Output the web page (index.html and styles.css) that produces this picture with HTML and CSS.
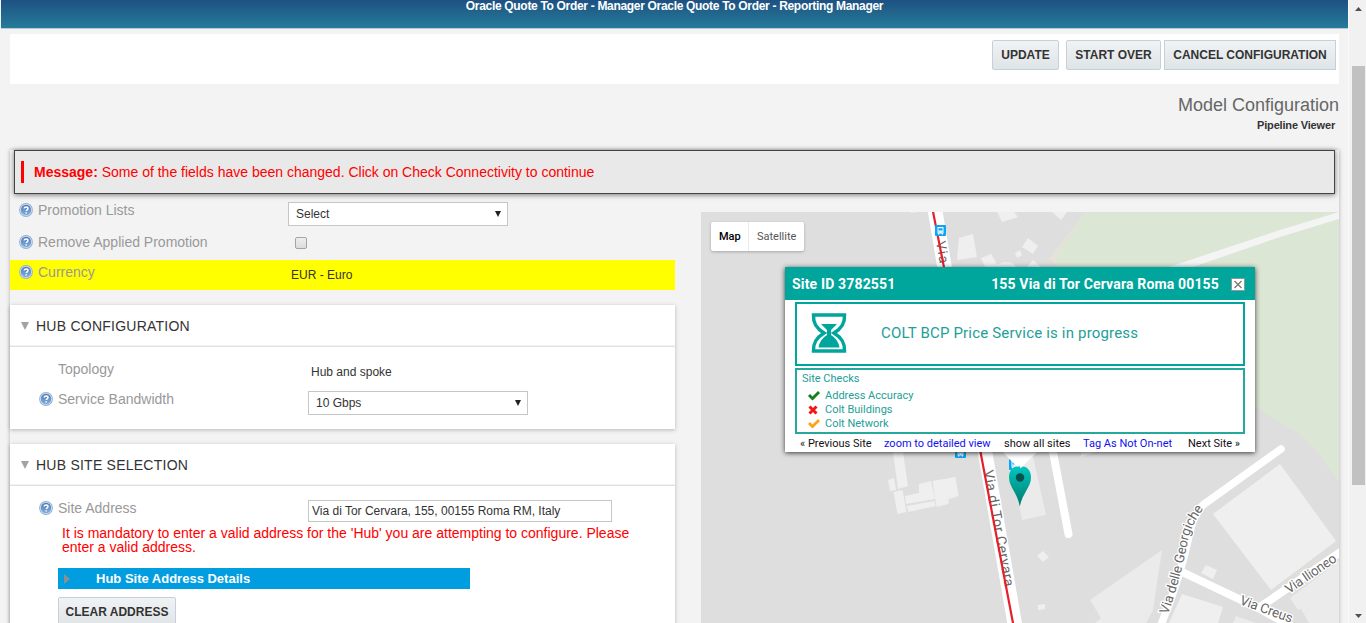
FILE: index.html
```html
<!DOCTYPE html>
<html lang="en">
<head>
<meta charset="utf-8">
<title>Model Configuration</title>
<link rel="stylesheet" href="styles.css">
</head>
<body>
<svg width="0" height="0" class="defs">
  <defs>
    <linearGradient id="ball" x1="0" y1="0" x2="0" y2="1"><stop offset="0" stop-color="#4a79b3"/><stop offset="1" stop-color="#86b0dd"/></linearGradient>
    <linearGradient id="pinfill" x1="0" y1="0" x2="0" y2="1"><stop offset="0" stop-color="#00c8be"/><stop offset="1" stop-color="#00776c"/></linearGradient>
    <symbol id="help" viewBox="0 0 14 14">
      <circle cx="7" cy="7" r="6.9" fill="#8fb0d6"/>
      <circle cx="7" cy="7" r="6" fill="#d3e1f0"/>
      <circle cx="7" cy="7" r="5.2" fill="url(#ball)"/>
      <path d="M5.1 5.500c.2-2.100 3.900-2.100 3.900 0 0 1.300-1.800 1.300-1.800 2.600M7.200 9.200v1.400" fill="none" stroke="#fff" stroke-width="1.500"/>
    </symbol>
    <symbol id="bus" viewBox="0 0 11 11">
      <rect width="11" height="11" rx="1" fill="#0aa5f5"/>
      <path d="M2.500 2h6v6.500h-6z" fill="#fff"/><path d="M3.400 3.200h4.200v2.300H3.400zM3.400 6.600h1v1h-1zM6.600 6.600h1v1h-1z" fill="#0aa5f5"/>
      <path d="M3 8h1.300v1.500H3zM6.700 8H8v1.500H6.700z" fill="#fff"/>
    </symbol>
  </defs>
</svg>
<div class="window">
  <div class="page">
    <header class="topbar"><span>Oracle Quote To Order - Manager Oracle Quote To Order - Reporting Manager</span></header>
    <div class="toolbar">
      <button class="btn b1">UPDATE</button><button class="btn b2">START OVER</button><button class="btn b3">CANCEL CONFIGURATION</button>
    </div>
    <div class="titles"><h1><span>Model Configuration</span></h1><a><span>Pipeline Viewer</span></a></div>
    <main class="content">
      <div class="message"><p><b>Message:</b> <span>Some of the fields have been changed. Click on Check Connectivity to continue</span></p></div>
      <div class="columns">
        <section class="form">
          <div class="row promo"><svg class="help"><use href="#help"/></svg><label>Promotion Lists</label><div class="select"><span>Select</span><svg width="6" height="6"><path d="M0 0h6L3 6z" fill="#222"/></svg></div></div>
          <div class="row remove"><svg class="help"><use href="#help"/></svg><label>Remove Applied Promotion</label><i class="check"></i></div>
          <div class="row currency"><svg class="help"><use href="#help"/></svg><label>Currency</label><span class="value">EUR - Euro</span></div>
          <div class="panel hub">
            <h2><svg width="8" height="8"><path d="M0 0h8L4 8z" fill="#a2a2a2"/></svg><span>HUB CONFIGURATION</span></h2>
            <div class="row topo"><label>Topology</label><span class="value">Hub and spoke</span></div>
            <div class="row band"><svg class="help"><use href="#help"/></svg><label>Service Bandwidth</label><div class="select"><span>10 Gbps</span><svg width="6" height="6"><path d="M0 0h6L3 6z" fill="#222"/></svg></div></div>
          </div>
          <div class="panel site">
            <h2><svg width="8" height="8"><path d="M0 0h8L4 8z" fill="#a2a2a2"/></svg><span>HUB SITE SELECTION</span></h2>
            <div class="row addr"><svg class="help"><use href="#help"/></svg><label>Site Address</label><input class="text" value="Via di Tor Cervara, 155, 00155 Roma RM, Italy"></div>
            <p class="error">It is mandatory to enter a valid address for the 'Hub' you are attempting to configure. Please<br>enter a valid address.</p>
            <div class="details"><svg width="6" height="10"><path d="M0 0v10l6-5z" fill="#8b8f92"/></svg><span>Hub Site Address Details</span></div>
            <button class="btn clear">CLEAR ADDRESS</button>
          </div>
        </section>
        <section class="map">
          <svg class="canvas" viewBox="701 212 638 411" width="638" height="411">
            <rect x="701" y="212" width="638" height="411" fill="#dedede"/>
            <path d="M1085 212L1057 255V268L1255 407L1298 433 1317 451 1339 482V212z" fill="#dce6d4"/>
            <path d="M1085 212L1049 259l8 6v-10L1085 212z" fill="#e6e2d8"/>
            <path d="M1166 268L1280 230 1339 212v7L1283 236 1190 268z" fill="#f4f4f4"/>
            <g fill="#efefef">
              <path d="M959 238l14-4 4 23-20 3zM981 258l10-4 7 12-12 3zM1028 238l10 8-5 8-11-7zM1033 260l9 8h-16zM1015 253l5-3 2 5-5 3zM997 212h17l4 5-16 5zM1052 212h15l-6 8zM911 212h6l-6 1z"/>
              <ellipse cx="1006" cy="268" rx="10" ry="6"/>
              <path d="M893 452h10l5 34-10 3zM888 480l6-2 2 12-6 1zM893.500 492l9-2 4 22-9 2zM905 496l14-3v-9l12-3 4 18-29 5zM932.500 481l23-4 3 19-10 3v5l-12 3zM906.500 506l28-5 1 5-27 6z"/>
              <path d="M1081 452h15l-15 5zM1037 556l6-5 6 6-6 5zM1038 605l7-1v5l-7 1z" />
              <path d="M1280 464l56 77-65 49-58-76zM1206 565l11 5-4 9-12-6zM1182 594l41 13-5 16h-49z"/>
              <path d="M1162 550l-72 50 11 18-6 5h51l7-13zM1290 598l49-37v62h-30l-8-14-3 1zM1236 616l20 7h-23zM1017 452h15l14 63-24 5-6-30z" fill="#ebebeb"/>
            </g>
            <g fill="none" stroke="#fff" stroke-linecap="round">
              <path d="M934 204L944 264 985 452 1016 631" stroke-width="14.500"/>
              <path d="M1053 452L1068.500 534" stroke-width="8"/>
              <path d="M1281 449L1207 502Q1194 510 1189 536Q1180 580 1158 632" stroke-width="7.500"/>
              <path d="M1180 571L1262 610 1294 628M1260 607L1342 551" stroke-width="8"/>
            </g>
            <g class="label">
              <text transform="translate(936 242) rotate(80)" textLength="22">Via</text>
              <text class="long" transform="translate(983.500 471) rotate(79.500)" textLength="118">Via di Tor Cervara</text>
              <path id="georg" d="M1168 615Q1183 570 1188 540 1192 523 1205 507" fill="none" stroke="none"/>
              <text textLength="113"><textPath href="#georg">Via delle Georgiche</textPath></text>
              <text transform="translate(1289 594) rotate(-34.500)" textLength="59">Via Ilioneo</text>
              <text transform="translate(1239 604) rotate(20)" textLength="55">Via Creus</text>
            </g>
            <path d="M931.500 204L944.500 270 980.500 452 1014.500 631" stroke="#e5202c" stroke-width="2.200" fill="none"/>
            <use href="#bus" x="935" y="225" width="11" height="11"/>
            <use href="#bus" x="955" y="447" width="11" height="11"/>
            <use href="#bus" x="1009" y="459" width="11" height="11"/>
            <path d="M1002 451h36L1022.500 466.500h-6z" fill="#fff"/>
            <path d="M1019.800 506.500C1017.500 493 1009 487 1009 477.500C1009 470.500 1013 466.500 1017 466.500L1020 468.500 1023 466.500C1027 466.500 1031 470.500 1031 477.500C1031 487 1022.500 493 1019.800 506.500z" fill="url(#pinfill)"/>
            <circle cx="1020" cy="477.500" r="4.200" fill="#06514d"/>
          </svg>
          <div class="maptype"><b>Map</b><span>Satellite</span></div>
          <article class="popup">
            <header><span class="sid">Site ID 3782551</span><span class="sad">155 Via di Tor Cervara Roma 00155</span><svg class="close" width="14" height="13"><path d="M.5.5h13v12H.5z" fill="#fff" stroke="#8e9a9a"/><path d="M3.500 3l7 7m0-7l-7 7" stroke="#777" stroke-width="1.300"/></svg></header>
            <div class="progress">
              <svg width="36" height="40" viewBox="0 0 36 40"><path d="M2.500 2h31C34 10 31 15 23 20 31 25 34 30 33.500 38h-31C2 30 5 25 13 20 5 15 2 10 2.500 2z" fill="#fff" stroke="#00a59b" stroke-width="3.500"/><path d="M10 11h16L20 17v5Q27 26 28.500 34.500h-21Q9 26 16 22v-5z" fill="#00a59b"/></svg>
              <span>COLT BCP Price Service is in progress</span>
            </div>
            <div class="checks">
              <h3><span>Site Checks</span></h3>
              <p><svg width="12" height="10"><path d="M0 5l2-2 2.500 2.500L10 0l2 2-7.500 7.500z" fill="#138013"/></svg><span>Address Accuracy</span></p>
              <p><svg width="12" height="10"><path d="M1.500 1.500l7 7m0-7l-7 7" stroke="#f21616" stroke-width="3"/></svg><span>Colt Buildings</span></p>
              <p><svg width="12" height="10"><path d="M0 5l2-2 2.500 2.500L10 0l2 2-7.500 7.500z" fill="#ffa418"/></svg><span>Colt Network</span></p>
            </div>
            <nav><a class="l1">« Previous Site</a><a class="l2">zoom to detailed view</a><a class="l3">show all sites</a><a class="l4">Tag As Not On-net</a><a class="l5">Next Site »</a></nav>
          </article>
        </section>
      </div>
    </main>
  </div>
  <aside class="scroll">
    <svg width="7" height="4"><path d="M0 4h7L3.500 0z" fill="#505050"/></svg>
    <i></i>
    <svg width="7" height="4"><path d="M0 0h7L3.500 4z" fill="#505050"/></svg>
  </aside>
</div>
</body>
</html>
```
FILE: styles.css
```css
* { box-sizing: border-box; }
html, body { margin: 0; height: 623px; overflow: hidden; background: #f3f3f3; }
body { font-family: "Liberation Sans", Arial, sans-serif; font-size: 12px; color: #333; }
h1, h2, h3, p { margin: 0; font-weight: normal; }
svg { display: block; flex: none; }
.defs { position: absolute; }
.window { display: flex; height: 623px; overflow: hidden; }
.page { width: 1348px; height: 623px; overflow: hidden; }

.topbar { height: 29px; margin-left: 1px; background: linear-gradient(#1e5182, #257c99); border-bottom: 1px solid #b8cad6; display: flex; justify-content: center; color: #fff; font-weight: bold; line-height: 12px; letter-spacing: -.315px; }
.topbar span { white-space: nowrap; }
.toolbar { height: 50px; margin: 5px 9px 0 10px; padding: 6px 3px 0 0; background: #fff; display: flex; justify-content: flex-end; }
.btn { font: bold 12px/28px "Liberation Sans", Arial, sans-serif; height: 30px; padding: 0; color: #333; text-align: center; white-space: nowrap; border: 1px solid #c4d0db; border-radius: 2px; background: linear-gradient(#f0f3f4, #dfe4e7); }
.b1 { width: 67px; margin-right: 7px; }
.b2 { width: 95px; margin-right: 3px; }
.b3 { width: 172px; border-radius: 0; }
.titles { height: 66px; padding: 10px 9px 0 0; display: flex; flex-direction: column; align-items: flex-end; }
.titles h1 { font-size: 18px; line-height: 22px; color: #666; }
.titles a { font-size: 11px; line-height: 18px; font-weight: bold; margin-right: 4px; letter-spacing: -.17px; }

.content { margin: 0 9px 0 10px; height: 480px; box-shadow: 0 0 4px rgba(0,0,0,.28); }
.message { height: 44px; margin: 0 4px; padding: 10px 6px; background: #e9e9e9; border: 1px solid #444; box-shadow: 0 1px 5px rgba(0,0,0,.5); }
.message p { height: 22px; padding-left: 10px; border-left: 3px solid red; color: red; font-size: 14px; line-height: 22px; white-space: nowrap; }
.columns { display: flex; height: 436px; }
.form { width: 665px; margin-right: 26px; }
.row { display: flex; align-items: flex-start; font-size: 12px; }
.row label { font-size: 14px; line-height: 16px; color: #999; white-space: nowrap; }
.help { width: 14px; height: 14px; margin: 0 5px 0 0; }
.promo, .remove, .currency { padding-left: 9px; }
.promo { height: 34px; padding-top: 9px; }
.promo label, .remove label, .currency label { width: 250px; margin-top: -1px; }
.promo .select { margin-top: -1px; }
.select { width: 220px; height: 24px; padding: 0 6px 0 7px; background: #fff; border: 1px solid #c6c6c6; display: flex; justify-content: space-between; align-items: center; line-height: 22px; }
.remove { height: 32px; padding-top: 7px; }
.check { width: 12px; height: 12px; margin: 2px 0 0 7px; border: 1px solid #a4a4a4; border-radius: 2px; background: linear-gradient(#eee, #dcdcdc); }
.currency { height: 30px; padding-top: 5px; background: #ff0; }
.currency .value { margin-left: 3px; line-height: 20px; }
.panel { background: #fff; box-shadow: 0 1px 4px rgba(0,0,0,.25); }
.panel h2 { height: 42px; padding-left: 11px; display: flex; align-items: center; gap: 7px; font-size: 14px; letter-spacing: .24px; border-bottom: 1px solid #e0e0e0; box-shadow: inset 0 -1px #f3f3f3; }
.hub { height: 124px; margin: 15px 0 15px; }
.topo { padding: 14px 0 0 48px; height: 43px; }
.topo label { width: 253px; }
.topo .value { line-height: 22px; }
.band { padding: 1px 0 0 29px; }
.band .help, .addr .help { margin-top: 1px; }
.band label, .addr label { width: 250px; }
.site { height: 200px; }
.addr { padding: 14px 0 0 29px; height: 40px; }
.text { width: 304px; height: 22px; padding: 0 3px; border: 1px solid #c6c6c6; background: #fff; font: 12px "Liberation Sans", Arial, sans-serif; color: #333; }
.error { padding-left: 52px; color: red; font-size: 14px; line-height: 14px; white-space: nowrap; }
.details { width: 412px; height: 21px; margin: 14px 0 8px 48px; padding-left: 6px; display: flex; align-items: center; gap: 26px; background: #009de0; color: #fff; font-size: 13px; font-weight: bold; }
.clear { display: block; width: 118px; margin-left: 48px; line-height: 26px; }

.map { position: relative; width: 638px; height: 411px; margin-top: 18px; overflow: hidden; font-family: Roboto, sans-serif; }
.label { font: 13.5px Roboto, sans-serif; fill: #666; paint-order: stroke; stroke: #fff; stroke-width: 2.5px; }
.label .long { font-size: 14px; }
.maptype { position: absolute; left: 10px; top: 10px; width: 93px; height: 29px; display: flex; font-size: 11px; line-height: 29px; background: #fff; border-radius: 2px; box-shadow: 0 1px 3px rgba(0,0,0,.25); color: #565656; }
.maptype b { width: 38px; padding-left: 8px; border-right: 1px solid #eaeaea; color: #000; font-weight: 500; }
.maptype span { padding-left: 8px; }
.popup { position: absolute; left: 84px; top: 55px; width: 470px; height: 185px; background: #fff; box-shadow: 0 1px 5px rgba(0,0,0,.75); color: #22a097; }
.popup header { height: 33px; padding: 0 10px 0 7px; display: flex; align-items: center; padding-top: 1px; background: #00a59b; color: #fff; font-size: 14px; font-weight: bold; letter-spacing: .16px; }
.popup .sad { margin-left: auto; margin-right: 12px; }
.progress { height: 64px; margin: 2px 10px; border: 2px solid #00a59b; display: flex; padding: 9px 0 0 14px; font-size: 15px; }
.progress span { margin: 10px 0 0 34px; line-height: 20px; white-space: nowrap; letter-spacing: .18px; }
.checks { height: 66px; margin: 0 10px; padding: 2px 0 0 5px; border: 2px solid #25a99e; font-size: 11px; }
.checks h3 { font-size: 11px; line-height: 14px; margin-bottom: 3px; }
.checks p { height: 14px; padding-left: 6px; line-height: 14px; display: flex; align-items: center; gap: 5px; }
.popup nav { height: 17px; display: flex; padding-left: 15px; font-size: 11px; line-height: 20px; color: #111; white-space: nowrap; }
.l1 { width: 84px; } .l2 { width: 120px; } .l3 { width: 79px; } .l4 { width: 105px; }
.l2, .l4 { color: #1010ee; }

.scroll { width: 18px; height: 623px; padding: 7px 1px 5px 2px; display: flex; flex-direction: column; align-items: center; background: #f1f1f1; border-left: 1px solid #fafafa; }
.scroll i { width: 13px; height: 419px; margin: 55px 0 auto; background: #c1c1c1; }
```
